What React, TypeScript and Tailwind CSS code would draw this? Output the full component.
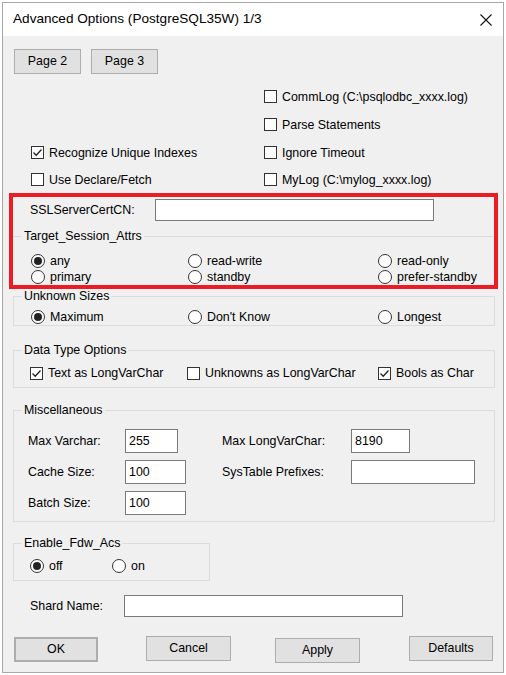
import type { ReactNode } from "react";

function Check({ checked = false, label }: { checked?: boolean; label: string }) {
  return (
    <span className="flex items-center">
      <span className="flex h-[13px] w-[13px] items-center justify-center border border-[#333333] bg-white">
        {checked && (
          <svg width="11" height="11" viewBox="0 0 11 11">
            <path d="M1.5 5.5 L4.2 8.2 L9.5 2.5" fill="none" stroke="#222222" strokeWidth="1.3" />
          </svg>
        )}
      </span>
      <span className="ml-[5px] whitespace-nowrap">{label}</span>
    </span>
  );
}

function Radio({ checked = false, label }: { checked?: boolean; label: string }) {
  return (
    <span className="flex items-center">
      <span className="flex h-[14px] w-[14px] items-center justify-center rounded-full border border-[#333333] bg-white">
        {checked && <span className="h-[8px] w-[8px] rounded-full bg-[#222222]" />}
      </span>
      <span className="ml-[5px] whitespace-nowrap">{label}</span>
    </span>
  );
}

function Button({ children, className = "" }: { children: ReactNode; className?: string }) {
  return (
    <div
      className={`flex h-[25px] items-center justify-center border border-[#adadad] bg-[#e1e1e1] ${className}`}
    >
      {children}
    </div>
  );
}

function Field({ width, value = "" }: { width: string; value?: string }) {
  return (
    <div className={`flex h-[24px] items-center border border-[#7a7a7a] bg-white pl-[3px] ${width}`}>
      {value}
    </div>
  );
}

export default function App() {
  return (
    <div className="h-[675px] w-[506px] bg-white pl-[2px] pt-[2px] font-['Liberation_Sans',Arial,sans-serif] text-[12.4px] text-black">
      <div className="flex h-[671px] w-[502px] flex-col border border-[#a8a8a8]">
        <div className="flex h-[33px] items-center justify-between bg-white pl-[10px] pr-[11px]">
          <span className="text-[13.6px]">Advanced Options (PostgreSQL35W) 1/3</span>
          <svg width="12" height="12" viewBox="0 0 12 12">
            <path d="M0.5 0.5 L11.5 11.5 M11.5 0.5 L0.5 11.5" stroke="#111111" strokeWidth="1.1" />
          </svg>
        </div>

        <div className="flex flex-1 flex-col bg-[#f0f0f0]">
          <div className="mt-[13px] flex gap-[10px] pl-[11px]">
            <Button className="w-[67px]">Page 2</Button>
            <Button className="w-[67px]">Page 3</Button>
          </div>

          <div className="mt-[9px] flex flex-col pl-[28px]">
            <div className="flex h-[28px] items-center">
              <div className="w-[233px]" />
              <Check label="CommLog (C:\psqlodbc_xxxx.log)" />
            </div>
            <div className="flex h-[28px] items-center">
              <div className="w-[233px]" />
              <Check label="Parse Statements" />
            </div>
            <div className="flex h-[28px] items-center">
              <div className="w-[233px]">
                <Check checked label="Recognize Unique Indexes" />
              </div>
              <Check label="Ignore Timeout" />
            </div>
            <div className="flex h-[26px] items-center">
              <div className="w-[233px]">
                <Check label="Use Declare/Fetch" />
              </div>
              <Check label="MyLog (C:\mylog_xxxx.log)" />
            </div>
          </div>

          <div className="ml-[6px] h-[96px] w-[489px] border-4 border-[#ec1c24]">
            <div className="mt-[2px] flex h-[22px] items-center pl-[17px]">
              <span className="w-[125px]">SSLServerCertCN:</span>
              <div className="h-[22px] w-[279px] border border-[#7a7a7a] bg-white" />
            </div>
            <fieldset className="mt-[8px] border-t border-[#dcdcdc]">
              <legend className="ml-[9px] px-[2px] leading-[15px]">Target_Session_Attrs</legend>
              <div className="mt-[9px] pl-[18px]">
                <div className="flex h-[16px] items-center">
                  <div className="w-[157px]">
                    <Radio checked label="any" />
                  </div>
                  <div className="w-[190px]">
                    <Radio label="read-write" />
                  </div>
                  <Radio label="read-only" />
                </div>
                <div className="flex h-[16px] items-center">
                  <div className="w-[157px]">
                    <Radio label="primary" />
                  </div>
                  <div className="w-[190px]">
                    <Radio label="standby" />
                  </div>
                  <Radio label="prefer-standby" />
                </div>
              </div>
            </fieldset>
          </div>

          <fieldset className="ml-[10px] w-[482px] border border-[#dcdcdc]">
            <legend className="ml-[8px] px-[2px] leading-[15px]">Unknown Sizes</legend>
            <div className="mt-[5px] flex h-[16px] items-center pl-[17px]">
              <div className="w-[157px]">
                <Radio checked label="Maximum" />
              </div>
              <div className="w-[190px]">
                <Radio label="Don't Know" />
              </div>
              <Radio label="Longest" />
            </div>
          </fieldset>

          <fieldset className="ml-[10px] mt-[17px] w-[482px] border border-[#dcdcdc] pb-[6px]">
            <legend className="ml-[8px] px-[2px] leading-[15px]">Data Type Options</legend>
            <div className="mt-[7px] flex h-[16px] items-center pl-[16px]">
              <div className="w-[157px]">
                <Check checked label="Text as LongVarChar" />
              </div>
              <div className="w-[191px]">
                <Check label="Unknowns as LongVarChar" />
              </div>
              <Check checked label="Bools as Char" />
            </div>
          </fieldset>

          <fieldset className="ml-[10px] mt-[15px] w-[482px] border border-[#dcdcdc] pb-[6px]">
            <legend className="ml-[8px] px-[2px] leading-[15px]">Miscellaneous</legend>
            <div className="mt-[11px] flex flex-col gap-[7px] pl-[14px]">
              <div className="flex items-center">
                <div className="flex w-[194px] items-center">
                  <span className="w-[97px]">Max Varchar:</span>
                  <Field width="w-[53px]" value="255" />
                </div>
                <span className="w-[129px]">Max LongVarChar:</span>
                <Field width="w-[59px]" value="8190" />
              </div>
              <div className="flex items-center">
                <div className="flex w-[194px] items-center">
                  <span className="w-[97px]">Cache Size:</span>
                  <Field width="w-[61px]" value="100" />
                </div>
                <span className="w-[129px]">SysTable Prefixes:</span>
                <Field width="w-[124px]" />
              </div>
              <div className="flex items-center">
                <div className="flex w-[194px] items-center">
                  <span className="w-[97px]">Batch Size:</span>
                  <Field width="w-[61px]" value="100" />
                </div>
              </div>
            </div>
          </fieldset>

          <fieldset className="ml-[10px] mt-[14px] w-[197px] border border-[#dcdcdc] pb-[6px]">
            <legend className="ml-[8px] px-[2px] leading-[15px]">Enable_Fdw_Acs</legend>
            <div className="mt-[7px] flex h-[16px] items-center pl-[16px]">
              <div className="w-[82px]">
                <Radio checked label="off" />
              </div>
              <Radio label="on" />
            </div>
          </fieldset>

          <div className="mt-[14px] flex items-center pl-[27px]">
            <span className="w-[94px]">Shard Name:</span>
            <div className="h-[22px] w-[279px] border border-[#7a7a7a] bg-white" />
          </div>

          <div className="mt-[19px] flex items-start pl-[11px]">
            <Button className="mt-[1px] w-[84px] border-2 border-[#0078d7]">OK</Button>
            <Button className="ml-[48px] w-[85px]">Cancel</Button>
            <Button className="ml-[44px] mt-[2px] w-[85px]">Apply</Button>
            <Button className="ml-[49px] w-[84px]">Defaults</Button>
          </div>
        </div>
      </div>
    </div>
  );
}
